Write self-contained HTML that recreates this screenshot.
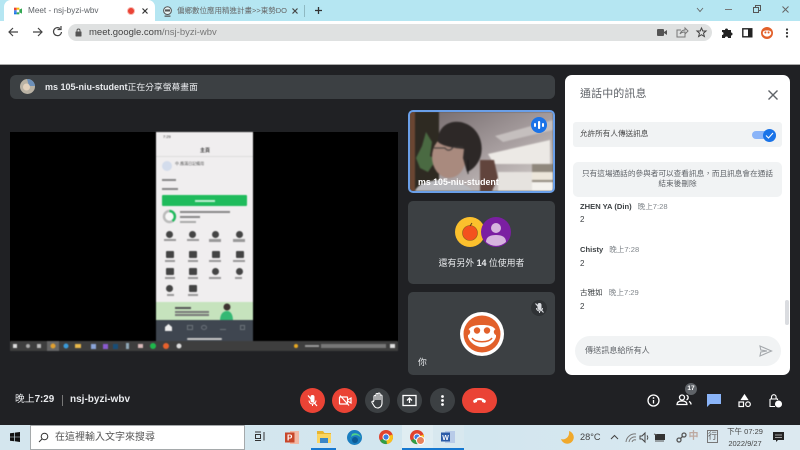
<!DOCTYPE html>
<html><head><meta charset="utf-8"><style>
*{box-sizing:border-box}
html,body{margin:0;padding:0;width:800px;height:450px;overflow:hidden;background:#202124;font-family:"Liberation Sans","Noto Sans CJK TC",sans-serif}
.a{position:absolute;white-space:nowrap}
svg{position:absolute;overflow:visible}
.rb{position:absolute;top:388px;width:25px;height:25px;border-radius:50%;background:#3c4043}
.red{background:#ea4335}
.ph{position:absolute;width:7px;height:7px;border-radius:50%;background:#444}
.pt{position:absolute;width:12px;height:1.5px;background:#999}
.pi{position:absolute;width:8px;height:7px;background:#444;border-radius:1px}
.bl{position:absolute;left:0;top:0;width:800px;height:450px;filter:blur(.45px)}
</style></head><body>
<!-- chrome -->
<div class="a" style="left:0;top:0;width:800px;height:21px;background:#b5e6f2"></div>
<div class="a" style="left:4px;top:0;width:151px;height:21px;background:#fff;border-radius:7px 7px 0 0"></div>
<svg style="left:13px;top:7px" width="10" height="8" viewBox="0 0 14 12"><rect x="1" y="1" width="4" height="4" fill="#ea4335"/><rect x="1" y="5" width="4" height="3" fill="#4285f4"/><rect x="1" y="8" width="4" height="3" fill="#1a73e8"/><rect x="5" y="1" width="4" height="3" fill="#fbbc04"/><rect x="5" y="8" width="4" height="3" fill="#34a853"/><path d="M9 4l4-2v8l-4-2z" fill="#34a853"/></svg>
<div class="a" style="left:28px;top:4px;font-size:8.2px;line-height:14px;color:#5f6368">Meet - nsj-byzi-wbv</div>
<div class="a" style="left:127px;top:7px;width:8px;height:8px;border-radius:50%;background:#ea4335;border:1.5px solid #f8b8b0"></div>
<svg style="left:142px;top:8px" width="6" height="6"><path d="M.5.500l5 5M5.500.500l-5 5" stroke="#333" stroke-width="1.200"/></svg>
<svg style="left:162px;top:6px" width="11" height="11" viewBox="0 0 13 13"><circle cx="6.500" cy="5.500" r="4.600" fill="#e8f4f5" stroke="#555" stroke-width="1.200"/><rect x="3.500" y="4" width="6" height="2.500" fill="#555"/><path d="M3 12h7" stroke="#555" stroke-width="1.500"/></svg>
<div class="a" style="left:177px;top:4px;font-size:7.500px;line-height:14px;color:#666;width:110px;overflow:hidden">偏鄉數位應用精進計畫&gt;&gt;東勢DO</div>
<svg style="left:292px;top:8px" width="6" height="6"><path d="M.5.500l5 5M5.500.500l-5 5" stroke="#444" stroke-width="1.200"/></svg>
<div class="a" style="left:304px;top:5px;width:1px;height:12px;background:#8fb9c2"></div>
<svg style="left:314px;top:6px" width="9" height="9"><path d="M4.500 1v7M1 4.500h7" stroke="#333" stroke-width="1.300"/></svg>
<svg style="left:696px;top:7px" width="8" height="6"><path d="M1 1l3 3.500L7 1" fill="none" stroke="#666" stroke-width=".9"/></svg>
<div class="a" style="left:725px;top:9px;width:7px;height:1px;background:#777"></div>
<svg style="left:753px;top:5px" width="8" height="8"><rect x=".5" y="2.500" width="5" height="5" fill="none" stroke="#555"/><path d="M2.500 2.500v-2h5v5h-2" fill="none" stroke="#555"/></svg>
<svg style="left:782px;top:6px" width="7" height="7"><path d="M.5.500l6 6M6.500.500l-6 6" stroke="#666"/></svg>
<div class="a" style="left:0;top:21px;width:800px;height:43px;background:#fff"></div>
<svg style="left:8px;top:25px" width="50" height="14" fill="none" stroke="#444" stroke-width="1.200"><path d="M1 7h9M5 3L1 7l4 4"/><path d="M25 7h9M30 3l4 4-4 4"/><path d="M58 3.500a4 4 0 1 0 1.500 3.500M59 1v3.500h-3.500" transform="translate(-6 0)"/></svg>
<div class="a" style="left:68px;top:24px;width:644px;height:17px;background:#dfe1e1;border-radius:9px"></div>
<svg style="left:74px;top:28px" width="9" height="9"><rect x="1.500" y="3.500" width="6" height="5" rx=".5" fill="#555"/><path d="M3 4V2.500a1.500 1.500 0 0 1 3 0V4" fill="none" stroke="#555"/></svg>
<div class="a" style="left:89px;top:25px;font-size:9.500px;line-height:15px;color:#444">meet.google.com<span style="color:#777">/nsj-byzi-wbv</span></div>
<svg style="left:656px;top:28px" width="12" height="9"><rect x="1" y="1" width="7" height="7" rx="1" fill="#555"/><path d="M8 4l3-2v5L8 5z" fill="#555"/></svg>
<svg style="left:676px;top:27px" width="12" height="11" fill="none" stroke="#777"><path d="M5 3H1v7h8V7"/><path d="M4 7c1-3 3-4 5-4V1l3 3-3 3V5c-2 0-4 .5-5 2z"/></svg>
<svg style="left:696px;top:27px" width="11" height="11"><path d="M5.500 1l1.300 3h3.200l-2.500 2.200.9 3.300-2.900-1.800-2.900 1.800.9-3.300L1 4h3.200z" fill="none" stroke="#444"/></svg>
<svg style="left:721px;top:27px" width="12" height="12"><path d="M1 3h3a1.500 1.500 0 0 1 3 0h3v2.500a1.500 1.500 0 0 1 0 3V11H7a1.500 1.500 0 0 0-3 0H1V8a1.500 1.500 0 0 0 0-3z" fill="#222"/></svg>
<svg style="left:742px;top:28px" width="11" height="10"><rect x=".8" y=".8" width="9" height="8" fill="#fff" stroke="#222" stroke-width="1.400"/><rect x="6" y="1" width="4" height="8" fill="#222"/></svg>
<svg style="left:761px;top:27px" width="12" height="12" viewBox="0 0 46 46"><circle cx="23" cy="23" r="23" fill="#e2602a"/><path d="M7 19c3-4 8-6 16-6s13 2 16 6v7c-2 6-9 11-16 11S9 32 7 26z" fill="#fff"/><circle cx="17" cy="21" r="4" fill="#e2602a"/><circle cx="29" cy="21" r="4" fill="#e2602a"/></svg>
<svg style="left:785px;top:28px" width="4" height="10" fill="#333"><circle cx="2" cy="1.500" r="1.100"/><circle cx="2" cy="5" r="1.100"/><circle cx="2" cy="8.500" r="1.100"/></svg>
<div class="a" style="left:0;top:64px;width:800px;height:1px;background:#aaa"></div>
<!-- share bar -->
<div class="a" style="left:10px;top:75px;width:545px;height:24px;background:#3c4043;border-radius:6px"></div>
<svg style="left:20px;top:79px" width="15" height="15"><circle cx="7.500" cy="7.500" r="7.500" fill="#b9b2a4"/><path d="M7 0a7.500 7.500 0 0 1 8 7H9z" fill="#6c8fb8"/><circle cx="6.500" cy="8" r="3.500" fill="#e3d2bd"/></svg>
<div class="a" style="left:45px;top:80px;font-size:9px;line-height:14px;color:#e8eaed;font-weight:bold">ms 105-niu-student<span style="font-weight:normal;font-size:8.800px">正在分享螢幕畫面</span></div>
<!-- shared screen -->
<div class="a" style="left:10px;top:132px;width:388px;height:210px;background:#000"></div>
<div class="bl">
<div class="a" style="left:156px;top:132px;width:97px;height:170px;background:#f0eeef"></div>
<div class="a" style="left:163px;top:134px;font-size:4px;color:#333">7:29</div>
<div class="a" style="left:200px;top:147px;font-size:5px;color:#444;font-weight:bold">主頁</div>
<div class="a" style="left:156px;top:156px;width:97px;height:1px;background:#ddd"></div>
<div class="a" style="left:162px;top:161px;width:10px;height:10px;border-radius:50%;background:#d3dcec"></div>
<div class="a" style="left:175px;top:161px;font-size:4px;color:#555">中.應滿日記備用</div>
<div class="pt" style="left:162px;top:179px;width:14px;background:#888"></div>
<div class="pt" style="left:162px;top:188px;width:16px;background:#888"></div>
<div class="a" style="left:162px;top:195px;width:85px;height:11px;background:#1fbb5c;border-radius:1px"></div>
<div class="pt" style="left:195px;top:200px;width:20px;background:#bff0d2"></div>
<svg style="left:162px;top:209px" width="16" height="16"><circle cx="7.500" cy="7.500" r="5.500" fill="#f7f7f7" stroke="#bbb" stroke-width="2.500"/><path d="M7.500 2a5.500 5.500 0 0 1 3 10" fill="none" stroke="#1fbb5c" stroke-width="2.500"/></svg>
<div class="pt" style="left:180px;top:211px;width:50px;background:#888"></div>
<div class="pt" style="left:180px;top:216px;width:20px;background:#888"></div>
<div class="pt" style="left:180px;top:221px;width:16px;background:#aaa"></div>
<div class="ph" style="left:166px;top:231px"></div><div class="ph" style="left:189px;top:231px"></div><div class="ph" style="left:212px;top:231px"></div><div class="ph" style="left:236px;top:231px"></div>
<div class="pt" style="left:164px;top:239px"></div><div class="pt" style="left:187px;top:239px"></div><div class="pt" style="left:209px;top:239px;height:3px"></div><div class="pt" style="left:233px;top:239px;height:3px"></div>
<div class="pi" style="left:166px;top:251px"></div><div class="pi" style="left:189px;top:251px"></div><div class="pi" style="left:212px;top:251px"></div><div class="pi" style="left:236px;top:251px"></div>
<div class="pt" style="left:165px;top:260px;width:10px"></div><div class="pt" style="left:188px;top:260px;width:10px"></div><div class="pt" style="left:209px;top:260px"></div><div class="pt" style="left:233px;top:260px"></div>
<div class="pi" style="left:166px;top:268px"></div><div class="pi" style="left:189px;top:268px"></div><div class="ph" style="left:212px;top:268px"></div><div class="ph" style="left:236px;top:268px"></div>
<div class="pt" style="left:165px;top:277px;width:10px"></div><div class="pt" style="left:188px;top:277px;width:10px"></div><div class="pt" style="left:209px;top:277px"></div><div class="pt" style="left:235px;top:277px;width:7px"></div>
<div class="ph" style="left:166px;top:285px"></div><div class="pi" style="left:189px;top:285px"></div>
<div class="pt" style="left:167px;top:294px;width:7px"></div><div class="pt" style="left:188px;top:294px;width:10px"></div>
<div class="a" style="left:156px;top:302px;width:97px;height:19px;background:#c6e3bd"></div>
<div class="pt" style="left:175px;top:307px;width:16px;background:#555"></div>
<div class="pt" style="left:175px;top:311px;width:34px;background:#777"></div>
<div class="pt" style="left:175px;top:314px;width:34px;background:#777"></div>
<svg style="left:218px;top:303px" width="16" height="18"><circle cx="9" cy="4" r="3.500" fill="#3d3330"/><path d="M2 18c0-7 3-10 7-10s6 4 6 10z" fill="#35b874"/></svg>
<div class="a" style="left:156px;top:320px;width:97px;height:21px;background:#3f4650"></div>
<svg style="left:165px;top:324px" width="7" height="7"><path d="M3.500 0L7 3v4H0V3z" fill="#eee"/></svg>
<div class="a" style="left:187px;top:325px;width:6px;height:5px;border:1px solid #6c727a"></div>
<div class="a" style="left:201px;top:325px;width:6px;height:5px;border:1px solid #6c727a;border-radius:50%"></div>
<div class="a" style="left:220px;top:325px;width:6px;height:5px;border-bottom:1px solid #6c727a"></div>
<div class="a" style="left:240px;top:325px;width:5px;height:5px;border:1px solid #6c727a"></div>
<div class="a" style="left:187px;top:338px;width:35px;height:2px;background:#c8c8c8;border-radius:1px"></div>
<div class="a" style="left:10px;top:341px;width:388px;height:10px;background:#3e3e3e"></div>
<svg style="left:10px;top:341px" width="388" height="10">
<rect x="3" y="3" width="4" height="4" fill="#ddd"/><circle cx="18" cy="5" r="2" fill="#aaa"/><rect x="27" y="3" width="4" height="4" fill="#bbb"/>
<rect x="37" y="0" width="12" height="10" fill="#666"/><circle cx="43" cy="5" r="2.500" fill="#e0a030"/><circle cx="56" cy="5" r="2.500" fill="#3a9ad9"/><rect x="65" y="3" width="6" height="4" fill="#e8b84a"/><rect x="81" y="3" width="5" height="5" fill="#8aa4d8"/><rect x="93" y="3" width="5" height="5" fill="#8a5ad0"/><rect x="103" y="3" width="5" height="5" fill="#174d78"/><rect x="116" y="2" width="3" height="6" fill="#8fa8b8"/><rect x="128" y="3" width="5" height="4" fill="#d8b8b8"/><circle cx="143" cy="5" r="3" fill="#1fb84c"/><circle cx="156" cy="5" r="3" fill="#e8612c"/><circle cx="169" cy="5" r="2.500" fill="#ddd"/>
<circle cx="286" cy="5" r="2" fill="#e8a820"/><rect x="295" y="4" width="14" height="2" fill="#999"/><rect x="311" y="3" width="65" height="4" fill="#777"/><rect x="380" y="3" width="5" height="4" fill="#ddd"/></svg>
</div>
<!-- tile 1 -->
<div class="a" style="left:408px;top:110px;width:147px;height:83px;border-radius:5px;background:#57514e;border:2px solid #6a9fe8;overflow:hidden">
<svg style="left:0;top:0;filter:blur(.8px)" width="143" height="79" viewBox="0 0 143 79">
<defs><linearGradient id="w" x1="0" y1="0" x2="1" y2="1"><stop offset="0" stop-color="#6f6567"/><stop offset=".55" stop-color="#a89fa0"/><stop offset="1" stop-color="#d8d4d0"/></linearGradient></defs>
<rect width="143" height="79" fill="url(#w)"/>
<rect x="0" width="5" height="79" fill="#6b4632"/><rect x="5" width="24" height="79" fill="#2e2a22"/>
<path d="M6 46l6-12 4-14 6 10-2 14 6 4-8 12-8-4z" fill="#4a6a42"/>
<path d="M78 42l62-14v24H84z" fill="#ece9e5"/><path d="M85 24l58-16v10l-50 12z" fill="#c5bfbe"/>
<rect x="122" y="52" width="21" height="27" fill="#8f877c"/><rect x="122" y="60" width="21" height="8" fill="#ece6da"/><rect x="122" y="70" width="21" height="9" fill="#f4f2ee"/>
<path d="M70 48h14l4 18-6 13H70z" fill="#61443c"/>
<rect x="88" y="60" width="34" height="19" fill="#e6e3df"/>
<path d="M5 79c3-8 16-11 26-11s26 3 32 11z" fill="#b8b8bc"/>
<ellipse cx="39" cy="45" rx="17" ry="21" fill="#a98a7e"/>
<path d="M28 30C27 13 42 7 54 11c13 4 20 18 17 32-2 8-8 15-14 17l-4-14 1-9c-8-1-20-2-26-7z" fill="#2d2827"/>
<path d="M24 36h11c2 3 6 3 8-1h10" fill="none" stroke="#3a3535" stroke-width="1.100"/>
<path d="M58 48v14" stroke="#1a1a1a"/>
</svg></div>
<div class="a" style="left:418px;top:176px;font-size:8.800px;line-height:12px;color:#fff;font-weight:bold">ms 105-niu-student</div>
<div class="a" style="left:531px;top:117px;width:16px;height:16px;border-radius:50%;background:#1a73e8"></div>
<svg style="left:534px;top:120px" width="10" height="10" fill="#fff"><rect x="0" y="3" width="2" height="4" rx="1"/><rect x="4" y="1" width="2.200" height="8" rx="1"/><rect x="8" y="3" width="2" height="4" rx="1"/></svg>
<!-- tile 2 -->
<div class="a" style="left:408px;top:201px;width:147px;height:83px;border-radius:5px;background:#3c4043"></div>
<svg style="left:455px;top:217px" width="57" height="31"><circle cx="15" cy="15" r="15" fill="#fbc02d"/><circle cx="15" cy="16" r="7.500" fill="#f4511e" stroke="#8a5a20" stroke-width=".6"/><path d="M15 9l2-3" stroke="#5b3a1a"/><circle cx="41" cy="15" r="15" fill="#7b1fa2"/><circle cx="41" cy="11" r="5" fill="#d6b4de"/><path d="M31 25c0-5 4-7 10-7s10 2 10 7a15 15 0 0 1-20 0z" fill="#d6b4de"/></svg>
<div class="a" style="left:408px;top:256px;width:147px;text-align:center;font-size:8.900px;line-height:14px;color:#e8eaed">還有另外 <b>14</b> 位使用者</div>
<!-- tile 3 -->
<div class="a" style="left:408px;top:292px;width:147px;height:83px;border-radius:5px;background:#3c4043"></div>
<div class="a" style="left:531px;top:300px;width:16px;height:16px;border-radius:50%;background:#2f3235"></div>
<svg style="left:534px;top:302px" width="11" height="12" fill="none" stroke="#dadce0"><rect x="4" y="1.500" width="3" height="6" rx="1.500" fill="#dadce0"/><path d="M2.500 6a3 3 0 0 0 6 0M5.500 9v2"/><path d="M1.500 1.500l8 9" stroke-width="1.100"/></svg>
<svg style="left:459px;top:311px" width="46" height="46" viewBox="0 0 46 46"><circle cx="23" cy="23" r="22" fill="#fff"/><circle cx="23" cy="23" r="18.500" fill="#e2602a"/><path d="M9 19c3-4 7-5 14-5s11 1 14 5v7c-2 6-8 10-14 10S11 32 9 26z" fill="#fff"/><circle cx="18" cy="19.500" r="3.200" fill="#e2602a"/><circle cx="28" cy="19.500" r="3.200" fill="#e2602a"/><circle cx="8" cy="21" r="3.200" fill="#e2602a"/><circle cx="38" cy="21" r="3.200" fill="#e2602a"/><path d="M13 27c3 5 17 5 20 0" fill="none" stroke="#e2602a" stroke-width="1.500"/></svg>
<div class="a" style="left:418px;top:355px;font-size:8.800px;line-height:14px;color:#e8eaed">你</div>
<!-- chat panel -->
<div class="a" style="left:565px;top:75px;width:225px;height:300px;background:#fff;border-radius:7px"></div>
<div class="a" style="left:580px;top:85px;font-size:11px;line-height:18px;color:#5f6368;letter-spacing:.1px">通話中的訊息</div>
<svg style="left:768px;top:90px" width="10" height="10"><path d="M.5.500l9 9M9.500.500l-9 9" stroke="#5f6368" stroke-width="1.400"/></svg>
<div class="a" style="left:573px;top:122px;width:209px;height:25px;background:#f1f3f4;border-radius:3px"></div>
<div class="a" style="left:580px;top:127px;font-size:7.600px;line-height:14px;color:#444">允許所有人傳送訊息</div>
<div class="a" style="left:752px;top:131px;width:24px;height:8px;border-radius:5px;background:#8ab4f8"></div>
<div class="a" style="left:763px;top:129px;width:13px;height:13px;border-radius:50%;background:#1a73e8"></div>
<svg style="left:765px;top:132px" width="9" height="7"><path d="M1 3.500l2.500 2.500L8 1" fill="none" stroke="#fff" stroke-width="1.100"/></svg>
<div class="a" style="left:573px;top:162px;width:209px;height:35px;background:#f1f3f4;border-radius:5px"></div>
<div class="a" style="left:573px;top:169px;width:209px;text-align:center;font-size:7.650px;line-height:10px;color:#5f6368;white-space:nowrap">只有這場通話的參與者可以查看訊息，而且訊息會在通話<br>結束後刪除</div>
<div class="a" style="left:580px;top:201px;font-size:7.600px;line-height:12px;color:#3c4043;font-weight:bold;clip-path:inset(2px 0 0 0)">ZHEN YA (Din)<span style="font-weight:normal;color:#80868b;margin-left:6px">晚上7:28</span></div>
<div class="a" style="left:580px;top:213px;font-size:8px;line-height:14px;color:#3c4043">2</div>
<div class="a" style="left:580px;top:243px;font-size:7.600px;line-height:14px;color:#3c4043;font-weight:bold">Chisty<span style="font-weight:normal;color:#80868b;margin-left:6px">晚上7:28</span></div>
<div class="a" style="left:580px;top:257px;font-size:8px;line-height:14px;color:#3c4043">2</div>
<div class="a" style="left:580px;top:286px;font-size:7.600px;line-height:14px;color:#3c4043">古雅如<span style="color:#80868b;margin-left:6px">晚上7:29</span></div>
<div class="a" style="left:580px;top:300px;font-size:8px;line-height:14px;color:#3c4043">2</div>
<div class="a" style="left:785px;top:300px;width:4px;height:25px;background:#dadce0;border-radius:2px"></div>
<div class="a" style="left:575px;top:336px;width:206px;height:30px;background:#f1f3f4;border-radius:15px"></div>
<div class="a" style="left:585px;top:344px;font-size:8.100px;line-height:14px;color:#5f6368">傳送訊息給所有人</div>
<svg style="left:759px;top:345px" width="14" height="12"><path d="M1 1l11.500 5L1 11l.8-4L8 6 1.800 5z" fill="none" stroke="#a5a9ad" stroke-width="1.100"/></svg>
<!-- bottom bar -->
<div class="a" style="left:15px;top:393px;font-size:9.800px;line-height:14px;color:#e8eaed">晚上<b>7:29</b></div>
<div class="a" style="left:62px;top:395px;width:1px;height:11px;background:#777"></div>
<div class="a" style="left:70px;top:393px;font-size:10px;line-height:14px;color:#e8eaed;font-weight:bold">nsj-byzi-wbv</div>
<div class="rb red" style="left:300px"></div>
<svg style="left:306px;top:394px" width="13" height="13" fill="none" stroke="#fff"><rect x="5" y="1.500" width="3" height="6.500" rx="1.500" fill="#fff"/><path d="M3 6.500a3.500 3.500 0 0 0 7 0M6.500 10v2"/><path d="M2 1.500l9 10.500" stroke-width="1.200"/></svg>
<div class="rb red" style="left:332px"></div>
<svg style="left:338px;top:394px" width="14" height="13" fill="none" stroke="#fff" stroke-width="1.200"><rect x="1.500" y="3" width="8" height="7" rx=".5"/><path d="M9.500 6L13 4v5l-3.500-2"/><path d="M2 1.500l9 10"/></svg>
<div class="rb" style="left:365px"></div>
<svg style="left:371px;top:392px" width="14" height="17"><path d="M3 8V4.500a1 1 0 0 1 2 0V8 2.500a1 1 0 0 1 2 0V8 2a1 1 0 0 1 2 0v6 -4a1 1 0 0 1 2 0v7c0 3-2 5-4.500 5C4 16 3 14 1 10.500c-.5-1 .8-1.800 1.500-1z" stroke="#fff" fill="none" stroke-width="1.100"/></svg>
<div class="rb" style="left:397px"></div>
<svg style="left:402px;top:394px" width="15" height="13"><rect x="1" y="1.500" width="13" height="10" fill="none" stroke="#fff" stroke-width="1.300"/><path d="M7.500 9V4.500M5 6.500l2.500-2.500L10 6.500" fill="none" stroke="#fff" stroke-width="1.300"/></svg>
<div class="rb" style="left:430px"></div>
<svg style="left:440px;top:394px" width="5" height="13" fill="#fff"><circle cx="2.500" cy="2.500" r="1.400"/><circle cx="2.500" cy="6.500" r="1.400"/><circle cx="2.500" cy="10.500" r="1.400"/></svg>
<div class="a" style="left:462px;top:388px;width:35px;height:25px;border-radius:13px;background:#ea4335"></div>
<svg style="left:472px;top:396px" width="15" height="8"><path d="M1 5c3-4 10-4 13 0l-1 2-3-1V4.500c-2-.5-3-.5-5 0V6L2 7z" fill="#fff"/></svg>
<svg style="left:647px;top:394px" width="13" height="13"><circle cx="6.500" cy="6.500" r="5.500" fill="none" stroke="#fff" stroke-width="1.300"/><path d="M6.500 6v3.500" stroke="#fff" stroke-width="1.300"/><circle cx="6.500" cy="4" r=".9" fill="#fff"/></svg>
<div class="a" style="left:685px;top:383px;width:12px;height:12px;border-radius:50%;background:#5f6368;color:#fff;font-size:6.500px;line-height:12px;text-align:center;font-weight:bold">17</div>
<svg style="left:676px;top:394px" width="16" height="12" fill="none" stroke="#fff" stroke-width="1.300"><circle cx="6" cy="3.500" r="2.500"/><path d="M1 10.500c0-3 3-3.500 5-3.500s5 .5 5 3.500z"/><path d="M10.500 1.200a2.500 2.500 0 0 1 0 4.700M13 7.500c1.500.6 2 1.500 2 3"/></svg>
<svg style="left:707px;top:394px" width="14" height="13"><path d="M0 0h14v10H3L0 13z" fill="#8ab4f8"/></svg>
<svg style="left:738px;top:394px" width="13" height="13" fill="none" stroke="#fff" stroke-width="1.200"><path d="M6.500 1l3 4.500h-6z" fill="#fff"/><rect x="1" y="8" width="4.500" height="4.500"/><circle cx="10" cy="10.200" r="2.300"/></svg>
<svg style="left:768px;top:393px" width="14" height="15" fill="none" stroke="#fff" stroke-width="1.100"><path d="M2 6h7.500v1M2 6v7.500h5"/><path d="M3.500 6V4a2.300 2.300 0 0 1 4.600 0v2"/><circle cx="10.500" cy="11" r="3" fill="#fff"/></svg>
<!-- taskbar -->
<div class="a" style="left:0;top:425px;width:800px;height:25px;background:linear-gradient(90deg,#d4e6ee,#d2e6ef 60%,#dce9f0)"></div>
<svg style="left:10px;top:432px" width="10" height="10" fill="#111"><path d="M0 1.300l4.300-.6V4.700H0zM5 .6l5-.6V4.700H5zM0 5.300h4.300v4L0 8.700zM5 5.300h5V10l-5-.7z"/></svg>
<div class="a" style="left:30px;top:425px;width:215px;height:25px;background:#fff;border:1.500px solid #a5a9ab"></div>
<svg style="left:38px;top:432px" width="11" height="11" fill="none" stroke="#333"><circle cx="6.500" cy="4.500" r="3.300"/><path d="M4 7l-3 3"/></svg>
<div class="a" style="left:55px;top:430px;font-size:10px;line-height:15px;color:#555">在這裡輸入文字來搜尋</div>
<svg style="left:254px;top:431px" width="12" height="11" fill="none" stroke="#333"><path d="M1 1h6M1 9.500h6"/><rect x="1.500" y="3.500" width="5" height="4"/><path d="M10 1v8.500"/></svg>
<svg style="left:285px;top:431px" width="14" height="13"><rect x="5" y="0" width="9" height="13" fill="#f2b8a4"/><rect x="0" y="1.500" width="9.500" height="10" fill="#c8472a"/><text x="2" y="9.500" font-size="8" fill="#fff" font-family="Liberation Sans" font-weight="bold">P</text></svg>
<svg style="left:317px;top:431px" width="14" height="12"><path d="M0 0h6l1.500 2H14v2H0z" fill="#e8b530"/><rect y="3" width="14" height="9" fill="#fbd560"/><rect x="3" y="7" width="8" height="5" fill="#3a86c8"/></svg>
<div class="a" style="left:311px;top:448px;width:25px;height:2px;background:#1678d0"></div>
<svg style="left:347px;top:430px" width="15" height="15"><circle cx="7.500" cy="7.500" r="7.500" fill="#1a7ec0"/><path d="M3 10c0-5 8-7 11-2-1-4-5-6-9-4z" fill="#4fd18a"/><circle cx="8" cy="10" r="3" fill="#0d5a94"/></svg>
<svg style="left:379px;top:430px" width="14" height="14"><circle cx="7" cy="7" r="7" fill="#e0432e"/><path d="M7 7L1 10.500A7 7 0 0 0 8 14z" fill="#2f9e44"/><path d="M7 7l6.500-2.500A7 7 0 0 1 8 14z" fill="#f8c21c"/><circle cx="7" cy="7" r="3.500" fill="#fff"/><circle cx="7" cy="7" r="2.600" fill="#3b7de0"/></svg>
<div class="a" style="left:402px;top:425px;width:31px;height:25px;background:#e0edf2"></div>
<svg style="left:410px;top:430px" width="14" height="14"><circle cx="7" cy="7" r="7" fill="#e0432e"/><path d="M7 7L1 10.500A7 7 0 0 0 8 14z" fill="#2f9e44"/><path d="M7 7l6.500-2.500A7 7 0 0 1 8 14z" fill="#f8c21c"/><circle cx="7" cy="7" r="3.500" fill="#fff"/><circle cx="7" cy="7" r="2.600" fill="#3b7de0"/></svg>
<div class="a" style="left:416px;top:436px;width:9px;height:9px;border-radius:50%;background:#e8825a;border:1px solid #fff"></div>
<div class="a" style="left:402px;top:448px;width:31px;height:2px;background:#1678d0"></div>
<div class="a" style="left:433px;top:425px;width:31px;height:25px;background:#d8e8ef"></div>
<svg style="left:441px;top:431px" width="14" height="12"><rect x="4" y="0" width="10" height="12" fill="#b8cbe8"/><rect x="0" y="1.500" width="9" height="9" fill="#2b5ca8"/><text x="1.200" y="9" font-size="7" fill="#fff" font-family="Liberation Sans" font-weight="bold">W</text></svg>
<div class="a" style="left:433px;top:448px;width:31px;height:2px;background:#1678d0"></div>
<svg style="left:560px;top:430px" width="15" height="15"><path d="M9 1a6.500 6.500 0 1 1-8 8c4 1.500 9-2 8-8z" fill="#f0a92c"/></svg>
<div class="a" style="left:580px;top:430px;font-size:9.200px;line-height:15px;color:#444">28°C</div>
<svg style="left:610px;top:434px" width="9" height="6"><path d="M1 5l3.500-3.500L8 5" fill="none" stroke="#444"/></svg>
<svg style="left:625px;top:432px" width="12" height="11" fill="none" stroke="#777"><path d="M1 10a9 9 0 0 1 10-8M4 10a6 6 0 0 1 7-5M7 10a3 3 0 0 1 4-2"/></svg>
<svg style="left:639px;top:432px" width="12" height="11" fill="none" stroke="#444"><path d="M1 4h2l3-3v9L3 7H1z"/><path d="M8 3.500a3 3 0 0 1 0 4"/></svg>
<svg style="left:654px;top:433px" width="12" height="9"><rect x="1" y="1" width="10" height="6" fill="#333"/><path d="M0 1l3 1M1 8h9" stroke="#555"/></svg>
<svg style="left:676px;top:432px" width="11" height="11" fill="none" stroke="#555" stroke-width="1.300"><circle cx="3" cy="8" r="2"/><circle cx="8" cy="3" r="2"/><path d="M4.500 6.500l2-2"/></svg>
<div class="a" style="left:687px;top:430px;width:13px;text-align:center;font-size:10px;line-height:14px;color:#bda9a0;font-weight:bold">中</div>
<div class="a" style="left:707px;top:430px;width:11px;height:13px;border:1px solid #777;text-align:center;font-size:9px;line-height:11px;color:#555">行</div>
<div class="a" style="left:715px;top:427px;width:60px;text-align:center;font-size:7.500px;line-height:10px;color:#444">下午 07:29</div>
<div class="a" style="left:715px;top:438px;width:60px;text-align:center;font-size:7.500px;line-height:11px;color:#444">2022/9/27</div>
<svg style="left:773px;top:432px" width="12" height="11"><path d="M0 0h11v8H5l-2 2V8H0z" fill="#222"/><path d="M2 3h7M2 5.500h7" stroke="#ccc" stroke-width=".7"/></svg>
</body></html>
